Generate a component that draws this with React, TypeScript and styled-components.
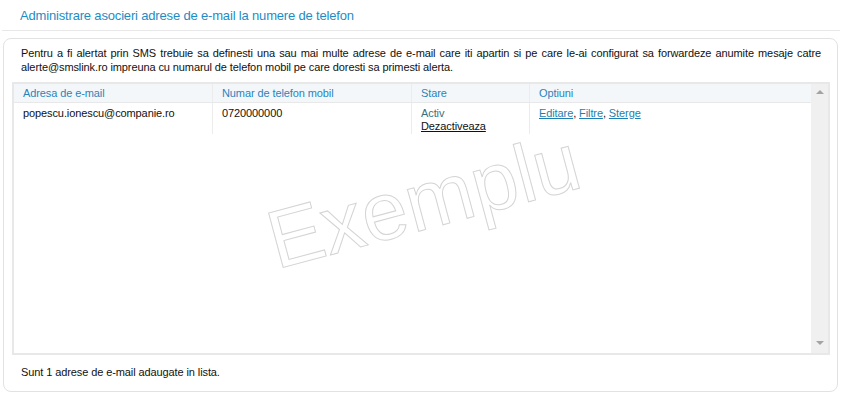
import React from 'react'
import styled, { createGlobalStyle } from 'styled-components'

const GlobalStyle = createGlobalStyle`
  html, body {
    margin: 0;
    padding: 0;
    background: #fff;
    font-family: 'Liberation Sans', Arial, sans-serif;
  }
`

const rows = [
  {
    email: 'popescu.ionescu@companie.ro',
    phone: '0720000000',
    state: 'Activ',
    toggle: 'Dezactiveaza',
    options: ['Editare', 'Filtre', 'Sterge'],
  },
]

const columns = '199px 199px 118px 1fr'

const Page = styled.div`
  width: 842px;
  height: 398px;
  overflow: hidden;
`

const TitleBar = styled.div`
  margin: 0 2px 0 2px;
  padding: 8px 18px 6px;
  border-bottom: 1px solid #e8e8e8;
  font-size: 13px;
  line-height: 16px;
  letter-spacing: -0.17px;
  color: #1e8cc4;
`

const Panel = styled.div`
  margin: 7px 4px 0 3px;
  height: 352px;
  border: 1px solid #e2e2e2;
  border-radius: 8px;
  padding: 0 7px 0 8px;
  display: flex;
  flex-direction: column;
  font-size: 11px;
  letter-spacing: -0.1px;
`

const Intro = styled.p`
  margin: 0;
  padding: 7px 9px 0 9px;
  line-height: 14px;
  color: #111;
  text-align: justify;
`

const Frame = styled.div`
  margin-top: 8px;
  height: 269px;
  border: 2px solid #e8e8e8;
  display: flex;
  position: relative;
  overflow: hidden;
`

const Grid = styled.div`
  flex: 1;
  display: flex;
  flex-direction: column;
`

const Row = styled.div<{ $head?: boolean }>`
  display: grid;
  grid-template-columns: ${columns};
  background: ${p => (p.$head ? '#f4f7fa' : '#fff')};
  border-bottom: ${p => (p.$head ? '1px solid #e8e8e8' : 'none')};
`

const Cell = styled.div<{ $head?: boolean; $last?: boolean }>`
  padding: ${p => (p.$head ? '3px 9px 2px' : '4px 9px 0')};
  height: ${p => (p.$head ? '13px' : '27px')};
  border-right: ${p => (p.$last ? 'none' : '1px solid #ececec')};
  line-height: 13px;
  color: ${p => (p.$head ? '#2a84b9' : '#111')};
`

const State = styled.div`
  color: #3c6f7d;
`

const Toggle = styled.a`
  color: #111;
  text-decoration: underline;
  cursor: pointer;
`

const Link = styled.a`
  color: #1c7fb3;
  text-decoration: underline;
  cursor: pointer;
`

const Scrollbar = styled.div`
  width: 17px;
  background: #f0f0f0;
  display: flex;
  flex-direction: column;
  justify-content: space-between;
  align-items: center;
  padding: 6px 0 8px;
`

const Arrow = styled.div<{ $down?: boolean }>`
  width: 0;
  height: 0;
  border-left: 4px solid transparent;
  border-right: 4px solid transparent;
  ${p =>
    p.$down
      ? 'border-top: 4px solid #a3a3a3;'
      : 'border-bottom: 4px solid #a3a3a3;'}
`

const Watermark = styled.div`
  position: absolute;
  left: 250px;
  top: 76px;
  font-size: 82px;
  line-height: 82px;
  letter-spacing: 0;
  color: transparent;
  -webkit-text-stroke: 1px #d4d4d4;
  transform: rotate(-15deg);
  transform-origin: center;
  pointer-events: none;
  white-space: nowrap;
`

const Footer = styled.div`
  padding: 10px 9px 0;
  line-height: 14px;
  color: #111;
`

export default function App() {
  return (
    <Page>
      <GlobalStyle />
      <TitleBar>Administrare asocieri adrese de e-mail la numere de telefon</TitleBar>
      <Panel>
        <Intro>
          Pentru a fi alertat prin SMS trebuie sa definesti una sau mai multe adrese de e-mail care
          iti apartin si pe care le-ai configurat sa forwardeze anumite mesaje catre
          alerte@smslink.ro impreuna cu numarul de telefon mobil pe care doresti sa primesti alerta.
        </Intro>
        <Frame>
          <Grid>
            <Row $head>
              <Cell $head>Adresa de e-mail</Cell>
              <Cell $head>Numar de telefon mobil</Cell>
              <Cell $head>Stare</Cell>
              <Cell $head $last>Optiuni</Cell>
            </Row>
            {rows.map(r => (
              <Row key={r.email}>
                <Cell>{r.email}</Cell>
                <Cell>{r.phone}</Cell>
                <Cell>
                  <State>{r.state}</State>
                  <Toggle>{r.toggle}</Toggle>
                </Cell>
                <Cell $last>
                  {r.options.map((o, i) => (
                    <React.Fragment key={o}>
                      <Link>{o}</Link>
                      {i < r.options.length - 1 ? ', ' : ''}
                    </React.Fragment>
                  ))}
                </Cell>
              </Row>
            ))}
          </Grid>
          <Scrollbar>
            <Arrow />
            <Arrow $down />
          </Scrollbar>
          <Watermark>Exemplu</Watermark>
        </Frame>
        <Footer>Sunt 1 adrese de e-mail adaugate in lista.</Footer>
      </Panel>
    </Page>
  )
}
